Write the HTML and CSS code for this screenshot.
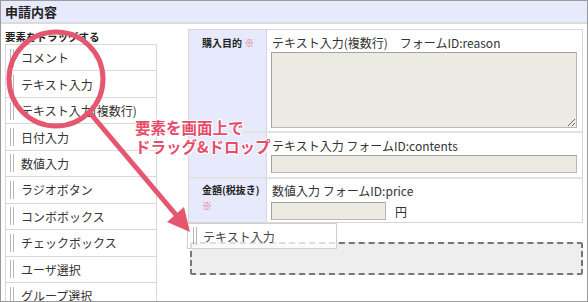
FILE: index.html
```html
<!DOCTYPE html>
<html lang="ja">
<head>
<meta charset="utf-8">
<link rel="stylesheet" href="styles.css">
</head>
<body>
<div class="frame">
  <div class="titlebar">申請内容</div>
  <div class="content">
    <div class="palette">
      <div class="palette-head">要素をドラッグする</div>
      <ul class="plist">
        <li class="pitem"><span class="handle"></span>コメント</li>
        <li class="pitem"><span class="handle"></span>テキスト入力</li>
        <li class="pitem"><span class="handle"></span>テキスト入力(複数行)</li>
        <li class="pitem"><span class="handle"></span>日付入力</li>
        <li class="pitem"><span class="handle"></span>数値入力</li>
        <li class="pitem"><span class="handle"></span>ラジオボタン</li>
        <li class="pitem"><span class="handle"></span>コンボボックス</li>
        <li class="pitem"><span class="handle"></span>チェックボックス</li>
        <li class="pitem"><span class="handle"></span>ユーザ選択</li>
        <li class="pitem"><span class="handle"></span>グループ選択</li>
      </ul>
    </div>
    <div class="formarea">
      <div class="ftable">
        <div class="frow r1">
          <div class="flabel">購入目的 <span class="req">※</span></div>
          <div class="fval">
            <div class="ftext">テキスト入力(複数行)　フォームID:reason</div>
            <textarea class="farea" readonly></textarea>
          </div>
        </div>
        <div class="frow r2">
          <div class="flabel"></div>
          <div class="fval">
            <div class="ftext">テキスト入力 フォームID:contents</div>
            <div class="finput wide"></div>
          </div>
        </div>
        <div class="frow r3">
          <div class="flabel">金額(税抜き) <span class="req">※</span></div>
          <div class="fval">
            <div class="ftext">数値入力 フォームID:price</div>
            <div class="numline"><div class="finput num"></div><span class="yen">円</span></div>
          </div>
        </div>
      </div>
      <div class="dropzone"></div>
    </div>
  </div>
  <div class="ghost"><span class="handle"></span>テキスト入力</div>
  <svg class="annot" width="588" height="302" viewBox="0 0 588 302">
    <circle cx="56" cy="79" r="47" fill="none" stroke="#e5566f" stroke-width="5"/>
    <line x1="90" y1="113" x2="177" y2="216" stroke="#e5566f" stroke-width="5"/>
    <polygon points="190,232 167,222 184,207" fill="#e5566f"/>
  </svg>
  <div class="callout">要素を画面上で<br>ドラッグ&amp;ドロップ</div>
</div>
</body>
</html>
```
FILE: styles.css
```css
html, body {
  margin: 0;
  padding: 0;
  background: #fff;
}
body {
  width: 588px;
  height: 302px;
  font-family: "Noto Sans CJK JP", "Liberation Sans", sans-serif;
  color: #333;
}
.frame {
  position: relative;
  box-sizing: border-box;
  width: 588px;
  height: 302px;
  border: 1px solid #9a9a9a;
  overflow: hidden;
}
.titlebar {
  height: 21px;
  line-height: 21px;
  background: #e7eafc;
  border-bottom: 2px solid #dcdcdc;
  font-weight: bold;
  font-size: 13px;
  padding-left: 4px;
  color: #222;
}
.content {
  display: flex;
  align-items: flex-start;
}
.palette {
  margin-left: 4px;
  width: 152px;
  padding-top: 6px;
}
.palette-head {
  font-size: 10.5px;
  font-weight: bold;
  line-height: 14px;
  color: #222;
  white-space: nowrap;
}
.plist {
  list-style: none;
  margin: 0;
  padding: 0;
  border: 1px solid #d8d8d8;
  border-bottom: none;
}
.pitem {
  box-sizing: border-box;
  height: 26.44px;
  border-bottom: 1px solid #d8d8d8;
  display: flex;
  align-items: center;
  font-size: 12px;
  color: #333;
  white-space: nowrap;
}
.handle {
  box-sizing: border-box;
  width: 4px;
  height: 18px;
  border-left: 1px solid #b8b8b8;
  border-right: 1px solid #b8b8b8;
  margin-left: 4px;
  margin-right: 7px;
  flex: none;
}
.formarea {
  margin-left: 31px;
  margin-top: 5px;
  width: 395px;
}
.ftable {
  border: 1px solid #d6d6d6;
}
.frow {
  display: flex;
  border-bottom: 2px solid #e2e2e2;
}
.frow.r3 {
  border-bottom: none;
}
.flabel {
  box-sizing: border-box;
  width: 77px;
  flex: none;
  background: #e6eafc;
  padding-left: 13px;
  padding-right: 2px;
  font-size: 10px;
  font-weight: bold;
  color: #222;
}
.req {
  color: #e8667a;
  font-weight: normal;
}
.fval {
  flex: 1;
  border-left: 1px solid #d6d6d6;
  padding: 0 5px 0 4px;
}
.ftext {
  font-size: 12px;
  line-height: 18px;
  color: #333;
  white-space: nowrap;
  padding-left: 1px;
}
.r1 .flabel { padding-top: 4px; line-height: 18px; }
.r1 .fval { padding-top: 4px; padding-bottom: 3px; }
.r2 .fval { padding-top: 4px; padding-bottom: 4px; }
.r3 .flabel { padding-top: 3px; line-height: 16px; }
.r3 .fval { padding-top: 3px; padding-bottom: 2px; }
.farea {
  display: block;
  box-sizing: border-box;
  width: 306px;
  height: 76px;
  margin: 0;
  background: #ebebe4;
  border: 1px solid #b8b8b8;
  border-top-color: #a2a2a2;
  border-left-color: #a2a2a2;
  resize: both;
}
.finput {
  box-sizing: border-box;
  height: 18px;
  background: #ebebe4;
  border: 1px solid #b8b8b8;
  border-top-color: #a2a2a2;
  border-left-color: #a2a2a2;
}
.finput.wide { width: 306px; }
.numline {
  display: flex;
  align-items: center;
  margin-top: 2px;
}
.finput.num { width: 115px; }
.yen {
  font-size: 12px;
  margin-left: 9px;
  color: #333;
}
.dropzone {
  box-sizing: border-box;
  margin-top: 19px;
  margin-left: 2px;
  height: 33px;
  background: #eeeeee;
  border: 2px dashed #777;
  border-radius: 2px;
}
.ghost {
  position: absolute;
  left: 186px;
  top: 222px;
  box-sizing: border-box;
  width: 150px;
  height: 26px;
  background: rgba(255, 255, 255, 0.75);
  border: 1px solid #d0d0d0;
  display: flex;
  align-items: center;
  font-size: 12px;
  color: #444;
}
.ghost .handle {
  margin-left: 5px;
  margin-right: 6px;
}
.annot {
  position: absolute;
  left: -1px;
  top: -1px;
}
.callout {
  position: absolute;
  left: 134px;
  top: 117px;
  font-size: 15.5px;
  line-height: 19px;
  font-weight: bold;
  color: #e54d6b;
  white-space: nowrap;
  text-shadow: 1px 0 0 #fff, -1px 0 0 #fff, 0 1px 0 #fff, 0 -1px 0 #fff,
    1px 1px 0 #fff, -1px -1px 0 #fff, 1px -1px 0 #fff, -1px 1px 0 #fff;
}
```
